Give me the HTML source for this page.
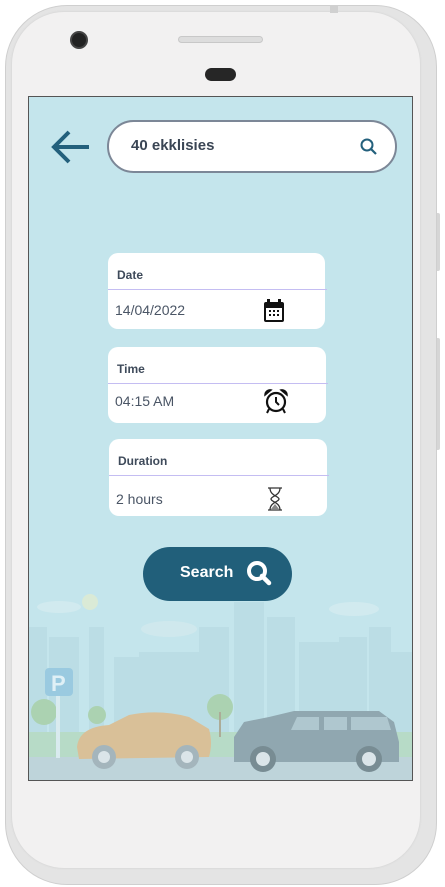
<!DOCTYPE html>
<html><head><style>
*{margin:0;padding:0;box-sizing:border-box}
body{width:445px;height:887px;background:#fff;position:relative;overflow:hidden;font-family:"Liberation Sans",sans-serif}
.phone{position:absolute;left:5px;top:5px;width:432px;height:880px;border-radius:62px;background:#e4e4e4;border:1px solid #cfcfcf}
.inner{position:absolute;left:12px;top:12px;width:408px;height:856px;border-radius:52px;background:#f2f1f1;box-shadow:0 0 2px #ccc}
.btn{position:absolute;background:#d6d6d6;width:5px;border-radius:2px}
.screen{position:absolute;left:28px;top:96px;width:385px;height:685px;background:#c4e5ec;border:1px solid #555;overflow:hidden}
.card{position:absolute;background:#fff;border-radius:10px}
.card .lbl{position:absolute;left:9px;top:15px;font-size:12px;font-weight:bold;color:#3e4a5a}
.card .line{position:absolute;left:0;right:-2px;top:36px;height:1px;background:#c4bdf2}
.card .val{position:absolute;left:7px;top:49px;font-size:14px;color:#4a5565}
.card svg{position:absolute}
</style></head><body>
<div class="btn" style="left:435px;top:213px;height:58px"></div>
<div class="btn" style="left:435px;top:338px;height:112px"></div>
<div class="phone"></div>
<div class="inner"></div>
<div style="position:absolute;left:70px;top:31px;width:18px;height:18px;border-radius:50%;background:#222;border:2px solid #444"></div>
<div style="position:absolute;left:178px;top:36px;width:85px;height:7px;border-radius:4px;background:#ddd;border:1px solid #c8c8c8"></div>
<div style="position:absolute;left:205px;top:68px;width:31px;height:13px;border-radius:7px;background:#262626"></div>
<div style="position:absolute;left:330px;top:5px;width:8px;height:8px;background:#d0d0d0"></div>

<div class="screen">
<svg width="385" height="685" style="position:absolute;left:0;top:0;opacity:.75" viewBox="0 0 385 685">
<circle cx="61" cy="505" r="8" fill="#e8edc8" opacity=".8"/>
<ellipse cx="30" cy="510" rx="22" ry="6" fill="#d6ecf0"/>
<ellipse cx="140" cy="532" rx="28" ry="8" fill="#d3eaee"/>
<ellipse cx="325" cy="512" rx="25" ry="7" fill="#d6ecf0"/>
<g fill="#b8dbe3">
<rect x="0" y="530" width="18" height="120"/><rect x="20" y="540" width="30" height="110"/>
<rect x="60" y="530" width="15" height="120"/><rect x="85" y="560" width="35" height="90"/>
<rect x="110" y="555" width="60" height="95"/><rect x="170" y="530" width="30" height="120"/>
<rect x="205" y="505" width="30" height="145"/><rect x="238" y="520" width="28" height="130"/>
<rect x="270" y="545" width="40" height="105"/><rect x="310" y="540" width="28" height="110"/>
<rect x="340" y="530" width="22" height="120"/><rect x="362" y="555" width="23" height="95"/>
</g>
<rect x="0" y="635" width="385" height="30" fill="#b3d8bb"/>
<rect x="0" y="660" width="385" height="25" fill="#bccfd5"/>
<g fill="#a3cc9e"><circle cx="15" cy="615" r="13"/><circle cx="68" cy="618" r="9"/><circle cx="191" cy="610" r="13"/><rect x="190" y="615" width="2" height="25" fill="#a59a7c"/></g>
<rect x="16" y="571" width="28" height="28" rx="4" fill="#8dc1dc"/>
<text x="22" y="594" font-size="22" font-weight="bold" fill="#e8f4fa" font-family="Liberation Sans">P</text>
<rect x="27" y="599" width="4" height="62" fill="#e0eef0"/>
<path d="M48 650 Q50 630 80 628 L100 618 Q130 612 160 620 L180 632 Q184 646 180 660 L50 662 Z" fill="#e0b47c"/>
<circle cx="75" cy="660" r="12" fill="#9aa6ad"/><circle cx="75" cy="660" r="6" fill="#e3e6e8"/>
<circle cx="158" cy="660" r="12" fill="#9aa6ad"/><circle cx="158" cy="660" r="6" fill="#e3e6e8"/>
<path d="M205 640 L215 625 L240 620 L265 614 L350 614 L365 625 L370 645 L370 665 L205 665 Z" fill="#7f939c"/>
<path d="M268 620 L290 620 L290 633 L262 633 Z M295 620 L318 620 L318 633 L295 633 Z M322 620 L358 620 L362 633 L322 633 Z" fill="#a9bec6"/>
<circle cx="234" cy="662" r="13" fill="#5f6f76"/><circle cx="234" cy="662" r="7" fill="#e3e6e8"/>
<circle cx="340" cy="662" r="13" fill="#5f6f76"/><circle cx="340" cy="662" r="7" fill="#e3e6e8"/>
</svg>

<svg width="44" height="44" style="position:absolute;left:20px;top:28px" viewBox="0 0 44 44"><path d="M40 22H6M20 7L5 22l15 15" fill="none" stroke="#23607c" stroke-width="4"/></svg>
<div style="position:absolute;left:78px;top:23px;width:290px;height:53px;border-radius:27px;background:#fff;border:2px solid #7c8797"></div>
<div style="position:absolute;left:102px;top:40px;font-size:15px;font-weight:bold;color:#3a4554">40 ekklisies</div>
<svg width="20" height="20" style="position:absolute;left:330px;top:40px" viewBox="0 0 20 20"><circle cx="8" cy="8" r="5.5" fill="none" stroke="#23607c" stroke-width="2"/><path d="M12 12l5 5" stroke="#23607c" stroke-width="2.2"/></svg>

<div class="card" style="left:79px;top:156px;width:217px;height:76px">
<div class="lbl">Date</div><div class="line"></div><div class="val">14/04/2022</div>
<svg width="24" height="26" style="left:154px;top:45px" viewBox="0 0 24 26"><rect x="2" y="4" width="20" height="20" rx="2" fill="#111"/><rect x="4" y="10" width="16" height="12" fill="#fff"/><rect x="5" y="1" width="3" height="5" fill="#111"/><rect x="16" y="1" width="3" height="5" fill="#111"/><g fill="#111"><rect x="7" y="12" width="2" height="2"/><rect x="11" y="12" width="2" height="2"/><rect x="15" y="12" width="2" height="2"/><rect x="7" y="16" width="2" height="2"/><rect x="11" y="16" width="2" height="2"/><rect x="15" y="16" width="2" height="2"/></g></svg>
</div>
<div class="card" style="left:79px;top:250px;width:218px;height:76px">
<div class="lbl">Time</div><div class="line"></div><div class="val" style="top:46px">04:15 AM</div>
<svg width="28" height="28" style="left:154px;top:40px" viewBox="0 0 28 28"><circle cx="14" cy="15" r="9" fill="none" stroke="#111" stroke-width="2.2"/><path d="M14 10v5l3 3" fill="none" stroke="#111" stroke-width="2"/><path d="M3 8a5 5 0 0 1 6-5zM25 8a5 5 0 0 0-6-5z" fill="#111" stroke="#111" stroke-width="1.5"/><path d="M7 22l-2 4M21 22l2 4" stroke="#111" stroke-width="2"/></svg>
</div>
<div class="card" style="left:80px;top:342px;width:218px;height:77px">
<div class="lbl">Duration</div><div class="line"></div><div class="val" style="top:52px">2 hours</div>
<svg width="20" height="26" style="left:156px;top:47px" viewBox="0 0 20 26"><path d="M3 2h14M3 24h14M5 2c0 8 9 8 9 11s-9 3-9 11M15 2c0 8-9 8-9 11s9 3 9 11" fill="none" stroke="#333" stroke-width="1.3"/><path d="M6 23l4-5 4 5z" fill="#888"/></svg>
</div>

<div style="position:absolute;left:114px;top:450px;width:149px;height:54px;border-radius:27px;background:#215f7a"></div>
<div style="position:absolute;left:151px;top:467px;font-size:16px;font-weight:bold;color:#fff">Search</div>
<svg width="28" height="28" style="position:absolute;left:216px;top:462px" viewBox="0 0 28 28"><circle cx="12" cy="12" r="8" fill="none" stroke="#fff" stroke-width="4"/><path d="M17 17l7 7" stroke="#fff" stroke-width="4.5" stroke-linecap="round"/></svg>
</div>
</body></html>
